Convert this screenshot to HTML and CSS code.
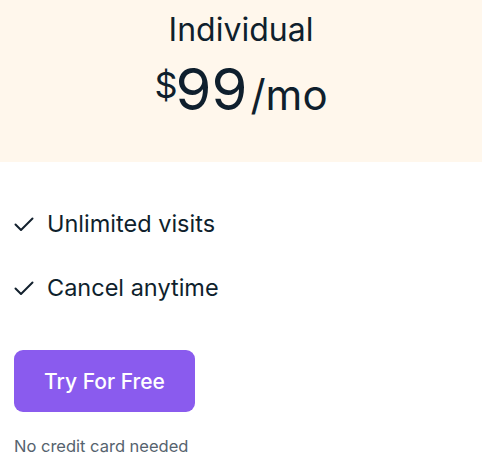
FILE: index.html
```html
<!DOCTYPE html>
<html>
<head>
<meta charset="utf-8">
<link rel="stylesheet" href="styles.css">
</head>
<body>
<div class="card">
  <div class="head">
    <div class="plan">Individual</div>
    <div class="price"><span class="cur">$</span><span class="amt">99</span><span class="per">/mo</span></div>
  </div>
  <div class="body">
    <ul class="features">
      <li><svg class="check" viewBox="0 0 20 16" width="20" height="16"><path d="M1.5 8.5 L7 14 L18.5 2.5" fill="none" stroke="#13212e" stroke-width="2" stroke-linecap="round" stroke-linejoin="round"/></svg><span>Unlimited visits</span></li>
      <li><svg class="check" viewBox="0 0 20 16" width="20" height="16"><path d="M1.5 8.5 L7 14 L18.5 2.5" fill="none" stroke="#13212e" stroke-width="2" stroke-linecap="round" stroke-linejoin="round"/></svg><span>Cancel anytime</span></li>
    </ul>
    <button class="cta">Try For Free</button>
    <div class="note">No credit card needed</div>
  </div>
</div>
</body>
</html>
```
FILE: styles.css
```css
html, body { margin: 0; padding: 0; background: #fff; }
body { font-family: "Inter", "Lato", sans-serif; color: #0f1f2d; }
.card { width: 482px; }
.head {
  background: #fff7ec;
  height: 162px;
  display: flex;
  flex-direction: column;
  align-items: center;
  padding-top: 10px;
  box-sizing: border-box;
}
.plan { font-size: 32px; line-height: 40px; font-weight: 400; }
.price { font-size: 58px; line-height: 1; margin-top: 10px; white-space: nowrap; }
.cur { font-size: 36px; vertical-align: 12px; margin-right: -2px; }
.amt { font-size: 58px; }
.per { font-size: 42px; margin-left: 3px; }
.body { padding: 47px 14px 0; }
.features { list-style: none; margin: 0; padding: 0; display: flex; flex-direction: column; gap: 34px; }
.features li { display: flex; align-items: center; gap: 13px; font-size: 23.5px; line-height: 30px; }
.check { flex: none; }
.cta {
  margin-top: 47px;
  width: 181px; height: 62px;
  border: none; border-radius: 9px;
  background: #8a5bee; color: #fff;
  font-family: inherit; font-size: 21px; font-weight: 500;
  display: block;
}
.note { margin-top: 24px; font-size: 16.5px; color: #56636e; }
```
